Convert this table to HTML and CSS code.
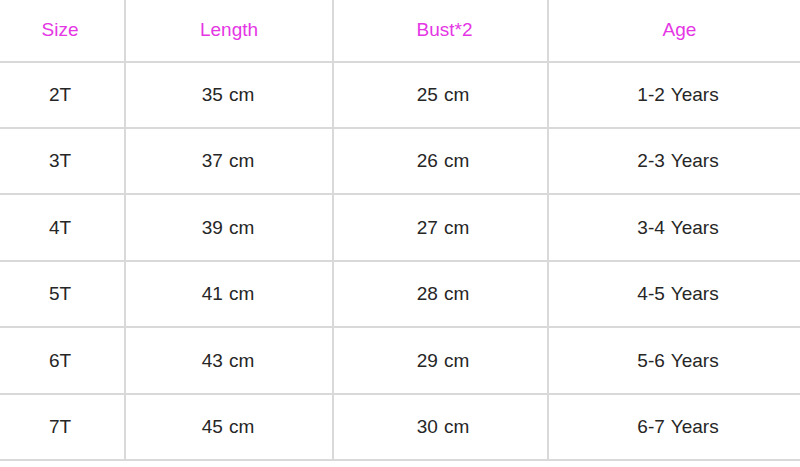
FILE: index.html
```html
<!DOCTYPE html>
<html>
<head>
<meta charset="utf-8">
<link rel="stylesheet" href="styles.css">
</head>
<body>
<div class="table">
  <div class="cell head c1">Size</div>
  <div class="cell head c2">Length</div>
  <div class="cell head c3">Bust*2</div>
  <div class="cell head c4">Age</div>

  <div class="cell c1">2T</div>
  <div class="cell c2">35 cm</div>
  <div class="cell c3">25 cm</div>
  <div class="cell c4">1-2 Years</div>

  <div class="cell c1">3T</div>
  <div class="cell c2">37 cm</div>
  <div class="cell c3">26 cm</div>
  <div class="cell c4">2-3 Years</div>

  <div class="cell c1">4T</div>
  <div class="cell c2">39 cm</div>
  <div class="cell c3">27 cm</div>
  <div class="cell c4">3-4 Years</div>

  <div class="cell c1">5T</div>
  <div class="cell c2">41 cm</div>
  <div class="cell c3">28 cm</div>
  <div class="cell c4">4-5 Years</div>

  <div class="cell c1">6T</div>
  <div class="cell c2">43 cm</div>
  <div class="cell c3">29 cm</div>
  <div class="cell c4">5-6 Years</div>

  <div class="cell c1">7T</div>
  <div class="cell c2">45 cm</div>
  <div class="cell c3">30 cm</div>
  <div class="cell c4">6-7 Years</div>
</div>
</body>
</html>
```

FILE: styles.css
```css
html, body {
  margin: 0;
  padding: 0;
  background: #ffffff;
}

.table {
  display: grid;
  grid-template-columns: 124px 208px 215px 253px;
  grid-template-rows: 63px 66px 66px 67px 66px 67px 66px;
  width: 800px;
  font-family: "Liberation Sans", Arial, sans-serif;
  font-size: 19px;
  color: #262626;
}

.cell {
  box-sizing: border-box;
  display: flex;
  align-items: center;
  justify-content: center;
  border-bottom: 2px solid #d9d9d9;
  word-spacing: 1px;
}

.c2, .c3, .c4 {
  border-left: 2px solid #d9d9d9;
}

.c1 {
  padding-right: 4px;
}

.c2 {
  padding-right: 2px;
}

.c3 {
  padding-left: 5px;
}

.c4 {
  padding-left: 7px;
}

.head {
  color: #e536e5;
  padding-bottom: 2px;
}

.head.c2 {
  padding-right: 0;
}

.head.c3 {
  padding-left: 8px;
}

.head.c4 {
  padding-left: 10px;
}
```
